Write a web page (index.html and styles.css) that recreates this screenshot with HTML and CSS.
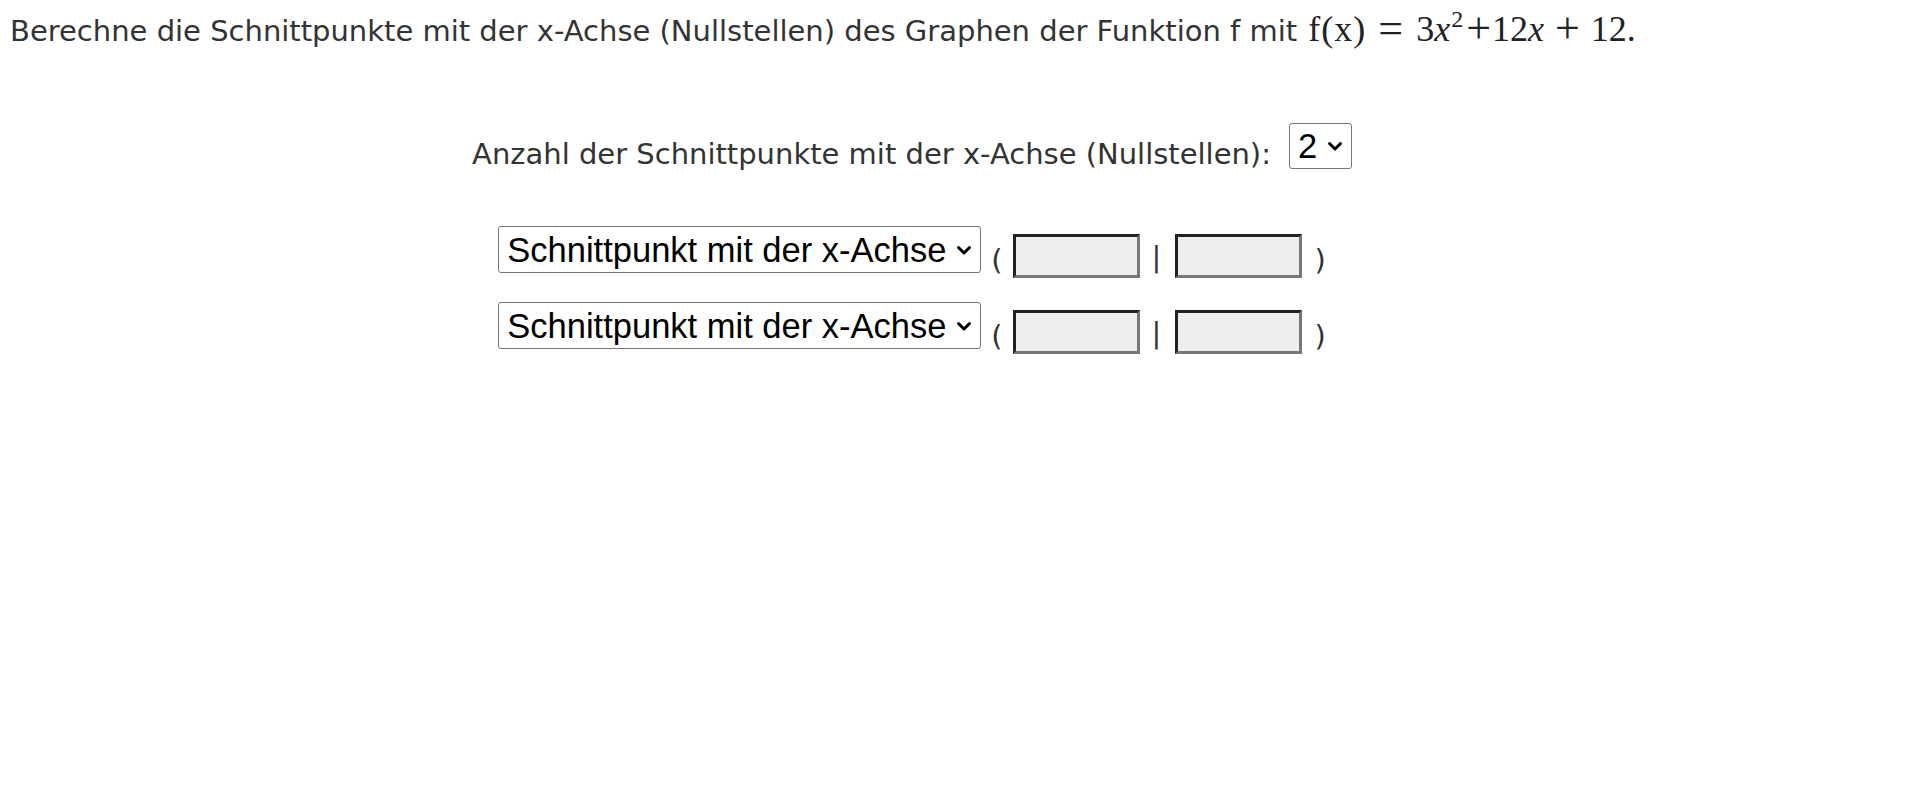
FILE: index.html
```html
<!DOCTYPE html>
<html lang="de">
<head>
<meta charset="utf-8">
<title>Nullstellen</title>
<link rel="stylesheet" href="styles.css">
</head>
<body>
<p class="question">Berechne die Schnittpunkte mit der x-Achse (Nullstellen) des Graphen der Funktion f mit <span class="math"><span class="rm">f(x)</span><span class="op rel">=</span><span class="num">3</span><i class="mi">x</i><sup class="sup">2</sup><span class="op tight">+</span><span class="num">12</span><i class="mi">x</i><span class="op bin">+</span><span class="num">12.</span></span></p>
<div class="task">
  <div class="count">
    <span class="label">Anzahl der Schnittpunkte mit der x-Achse (Nullstellen):</span>
    <span class="select-wrap">
      <select class="dropdown small"><option>2</option></select>
      <svg class="chevron" width="16" height="11" viewBox="0 0 16 11" aria-hidden="true"><polyline points="2.5,2.5 8,8 13.5,2.5" fill="none" stroke="#000" stroke-width="3" stroke-linecap="round" stroke-linejoin="round"/></svg>
    </span>
  </div>
  <div class="points">
    <div class="point-row">
      <span class="select-wrap">
        <select class="dropdown"><option>Schnittpunkt mit der x-Achse</option></select>
        <svg class="chevron" width="16" height="11" viewBox="0 0 16 11" aria-hidden="true"><polyline points="2.5,2.5 8,8 13.5,2.5" fill="none" stroke="#000" stroke-width="3" stroke-linecap="round" stroke-linejoin="round"/></svg>
      </span>
      <span class="paren open">(</span>
      <input class="coord" type="text">
      <span class="sep">|</span>
      <input class="coord" type="text">
      <span class="paren close">)</span>
    </div>
    <div class="point-row">
      <span class="select-wrap">
        <select class="dropdown"><option>Schnittpunkt mit der x-Achse</option></select>
        <svg class="chevron" width="16" height="11" viewBox="0 0 16 11" aria-hidden="true"><polyline points="2.5,2.5 8,8 13.5,2.5" fill="none" stroke="#000" stroke-width="3" stroke-linecap="round" stroke-linejoin="round"/></svg>
      </span>
      <span class="paren open">(</span>
      <input class="coord" type="text">
      <span class="sep">|</span>
      <input class="coord" type="text">
      <span class="paren close">)</span>
    </div>
  </div>
</div>
</body>
</html>
```
FILE: styles.css
```css
html, body {
  margin: 0;
  padding: 0;
  background: #ffffff;
}

body {
  font-family: "DejaVu Sans", Verdana, sans-serif;
  color: #333333;
  font-size: 29px;
}

.question {
  margin: 0;
  padding: 9px 0 0 10px;
  line-height: 40px;
  height: 40px;
  white-space: nowrap;
}

.math {
  font-family: "Liberation Serif", "DejaVu Serif", serif;
  font-size: 36px;
  color: #222222;
  margin-left: 2px;
}

.rm {
  letter-spacing: 1px;
}

.mi {
  font-style: italic;
}

.sup {
  font-size: 24px;
  vertical-align: 14px;
  line-height: 0;
  margin-left: 1px;
}

.op {
  font-size: 44px;
  line-height: 0;
  vertical-align: -2px;
}

.op.rel {
  margin: 0 13px 0 12px;
}

.op.tight {
  margin: 0 1px 0 3px;
}

.op.bin {
  margin: 0 11px 0 11px;
}

.task {
  width: 1824px;
  margin-top: 74px;
  display: flex;
  flex-direction: column;
  align-items: center;
}

.count {
  display: flex;
  align-items: flex-start;
}

.label {
  line-height: 34px;
  margin-top: 14px;
  margin-right: 18px;
}

.select-wrap {
  position: relative;
  display: inline-flex;
}

.dropdown {
  appearance: none;
  -webkit-appearance: none;
  box-sizing: border-box;
  height: 47px;
  margin: 0;
  padding: 0 33px 0 8px;
  font-family: "Liberation Sans", Arial, sans-serif;
  font-size: 34.5px;
  color: #000000;
  background: #ffffff;
  border: 1px solid #767676;
  border-radius: 3px;
}

.dropdown.small {
  height: 46px;
}

.chevron {
  position: absolute;
  right: 9px;
  top: 50%;
  margin-top: -5px;
  pointer-events: none;
}

.points {
  margin-top: 55px;
  display: flex;
  flex-direction: column;
  gap: 24px;
}

.point-row {
  display: flex;
  align-items: flex-start;
}

.paren, .sep {
  line-height: 34px;
}

.paren {
  margin-top: 17px;
}

.paren.open {
  margin-left: 10px;
  margin-right: 10px;
}

.paren.close {
  margin-left: 12px;
  margin-right: 0;
}

.sep {
  margin-top: 14px;
  margin-left: 12px;
  margin-right: 14px;
}

.coord {
  box-sizing: border-box;
  width: 127px;
  height: 44px;
  margin: 8px 0 0 0;
  padding: 0 4px;
  background: #eeeeee;
  border-width: 3px;
  border-style: solid;
  border-top-color: #222222;
  border-left-color: #222222;
  border-right-color: #777777;
  border-bottom-color: #777777;
  font-size: 20px;
}
```
